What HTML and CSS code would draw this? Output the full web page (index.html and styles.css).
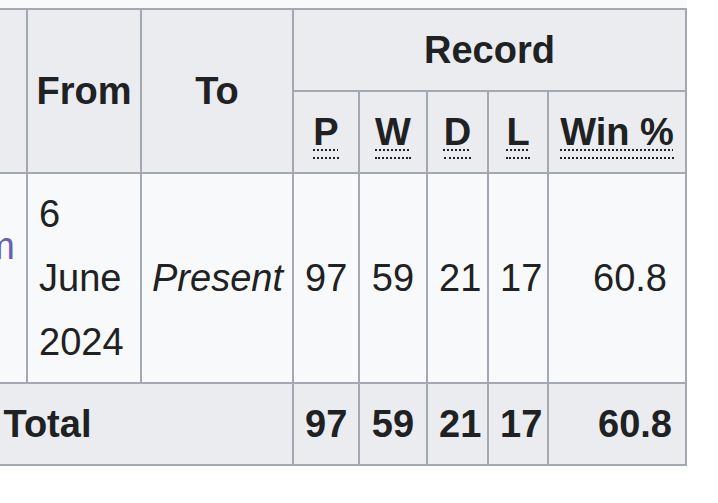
FILE: index.html
```html
<!DOCTYPE html>
<html lang="en">
<head>
<meta charset="utf-8">
<title>Record</title>
<link rel="stylesheet" href="styles.css">
</head>
<body>
<div class="wrap">
<table class="wikitable">
<colgroup>
<col class="c-name"><col class="c-from"><col class="c-to"><col class="c-p"><col class="c-w"><col class="c-d"><col class="c-l"><col class="c-pct">
</colgroup>
<thead>
<tr>
<th rowspan="2">Name</th>
<th rowspan="2" class="h-tight">From</th>
<th rowspan="2">To</th>
<th colspan="5">Record</th>
</tr>
<tr>
<th><abbr title="Played">P</abbr></th>
<th><abbr title="Won">W</abbr></th>
<th><abbr title="Drawn">D</abbr></th>
<th><abbr title="Lost">L</abbr></th>
<th><abbr title="Win percentage">Win %</abbr></th>
</tr>
</thead>
<tbody>
<tr>
<td class="name"><a href="#" class="name-link">Waseem</a></td>
<td>6 June 2024</td>
<td class="present"><i>Present</i></td>
<td class="num">97</td>
<td class="num">59</td>
<td class="num">21</td>
<td class="num">17</td>
<td class="pct">60.8</td>
</tr>
<tr class="total">
<th colspan="3">Total</th>
<th>97</th>
<th>59</th>
<th>21</th>
<th>17</th>
<th class="pct-total">60.8</th>
</tr>
</tbody>
</table>
</div>
</body>
</html>
```
FILE: styles.css
```css
html, body {
  margin: 0;
  padding: 0;
  background: #ffffff;
}

body {
  width: 718px;
  height: 503px;
  overflow: hidden;
  font-family: "Liberation Sans", Arial, sans-serif;
  color: #202122;
}

.wrap {
  width: max-content;
  margin-left: -199px;
  padding-top: 8px;
  background: #f8f9fa;
}

.wikitable {
  border-collapse: collapse;
  table-layout: fixed;
  width: 886px;
  background: #f8f9fa;
  font-size: 38px;
  line-height: 64px;
}

.c-name { width: 225px; }
.c-from { width: 114px; }
.c-to { width: 152px; }
.c-p { width: 66px; }
.c-w { width: 68px; }
.c-d { width: 61px; }
.c-l { width: 60px; }
.c-pct { width: 138px; }

.wikitable th,
.wikitable td {
  border: 2px solid #a2a9b1;
  padding: 8px 11px;
  vertical-align: middle;
}

.wikitable th {
  background: #eaecf0;
  font-weight: bold;
  text-align: center;
  white-space: nowrap;
}

.wikitable .h-tight {
  padding-left: 8px;
  padding-right: 8px;
}

abbr {
  text-decoration: underline dotted;
  text-decoration-thickness: 2px;
  text-underline-offset: 4px;
  border-bottom: 2px dotted #202122;
  padding-bottom: 4px;
}

.wikitable .name {
  text-align: right;
  white-space: nowrap;
  padding-bottom: 72px;
}

.name-link {
  color: #6a60b0;
  text-decoration: none;
}

.wikitable .present {
  white-space: nowrap;
  padding-left: 10px;
  padding-right: 9px;
}

.wikitable .num {
  text-align: center;
}

.wikitable .pct {
  text-align: right;
  padding-right: 18px;
}

.wikitable .pct-total {
  text-align: right;
  padding-right: 13px;
}
```
